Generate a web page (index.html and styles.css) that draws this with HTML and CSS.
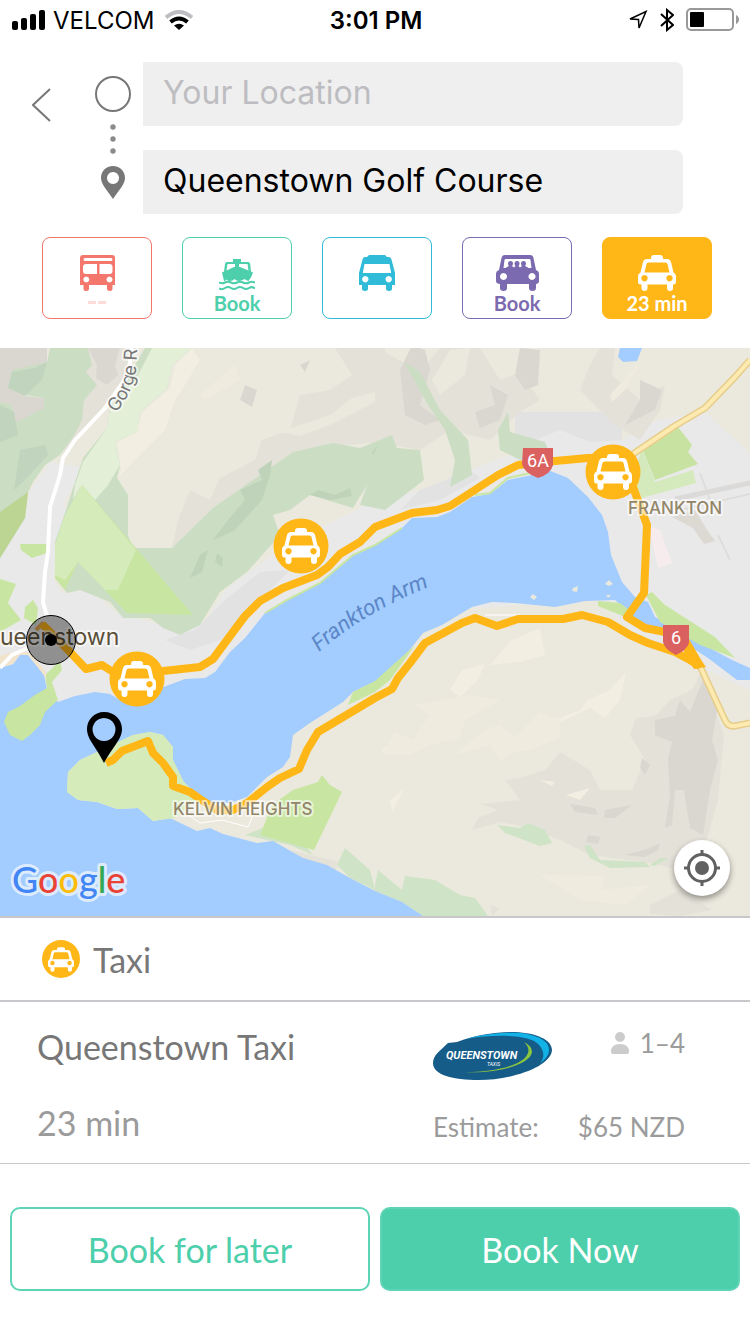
FILE: index.html
```html
<!DOCTYPE html>
<html lang="en">
<head>
<meta charset="UTF-8">
<meta name="viewport" content="width=device-width, initial-scale=1.0">
<title>Queenstown Taxi</title>
<link rel="stylesheet" href="styles.css">
</head>
<body>
<svg class="sprite" aria-hidden="true">
    <symbol id="taxi" viewBox="0 0 38 36">
        <path fill="currentColor" fill-rule="evenodd" d="M9 4h4V3q0-3 3-3h6q3 0 3 3v1h4q3 0 4 3l2.500 10.500q2.500 1 2.500 4V27q0 2-2 2.500H35V33q0 3-3 3t-3-3v-3.500H9.500V33q0 3-3 3t-3-3v-3.500H2Q0 29 0 27v-5.500q0-3 2.500-4L5 7q1-3 4-3zM10.500 7.500q-1.500 0-2 1.500L6.500 17.500h25L29.500 9q-.5-1.500-2-1.500zM6.500 20a3.200 3.200 0 1 0 .01 0zM31.500 20a3.200 3.200 0 1 0 .01 0z"/>
    </symbol>
    <symbol id="bus" viewBox="0 0 35 36">
        <path fill="currentColor" fill-rule="evenodd" d="M3 0h29q3 0 3 3v27h-2.500v3.500q0 2.500-2.700 2.500t-2.800-2.500V30H9v3.500Q9 36 6.200 36t-2.700-2.500V30H0V3q0-3 3-3zM5 3q-1.500 0-1.500 1.500T5 6h26q1.500 0 1.500-1.500T31 3zM6 9q-3 0-3 3v4q0 3 3 3h11V9zM19.500 9v10h10q3 0 3-3v-4q0-3-3-3zM6.300 21.500a3 3 0 1 0 .01 0zM29.500 21.500a3 3 0 1 0 .01 0z"/>
    </symbol>
    <symbol id="ferry" viewBox="0 0 36 32">
        <path fill="currentColor" fill-rule="evenodd" d="M14 0h8v3h7q2 0 2.200 2l.8 7.500 2 1-1.500 4-3 4.500q-2-.3-4-2-3 2-5.500 2t-4.500-2q-2 2-4.500 2-2 0-3.500-1.500-1 1.500-2.500 1.500L3 13.500l2-1L6 5q.2-2 2-2h6zM8.500 5 7.500 11.500 15 8h1V5zM20 5v3h1l8.500 3.500L28.500 5z"/>
        <path fill="none" stroke="currentColor" stroke-width="2" d="M0 23.500q3 1.500 6 0t6 0 6 0 6 0 6 0 6 0M0 29.500q3 1.500 6-.5t6 0 6 0 6 0 6 0 6 .5"/>
    </symbol>
    <symbol id="van" viewBox="0 0 36 36">
        <path fill="currentColor" fill-rule="evenodd" d="M10 0h16l2 2h2q2 0 2.500 2.500L36 18v12h-3v3.500q0 2.500-3 2.500t-3-2.500V30H9v3.500Q9 36 6 36t-3-2.500V30H0V18L3.500 4.500Q4 2 6 2h2zM5.500 9 3.800 18h28.400L30.500 9zM6.300 21a3.200 3.200 0 1 0 .01 0zM29.700 21a3.200 3.200 0 1 0 .01 0z"/>
    </symbol>
    <symbol id="shuttle" viewBox="0 0 43 36">
        <path fill="currentColor" fill-rule="evenodd" d="M9 0h25q3 0 3.500 3L40 15q3 1 3 4v7q0 2.500-3 3v4q0 3-3.500 3T33 33v-4H11v4q0 3-3.500 3T4 33v-4q-4-.5-4-3v-7q0-3 3-4L5.500 3Q6 0 9 0zM10 4q-1.500 0-1.500 1L7.500 13h28L34.500 5q0-1-1.500-1zM7.500 18a3.500 3.500 0 1 0 .01 0zM36 18a3.500 3.500 0 1 0 .01 0z"/>
        <path fill="currentColor" d="M12 8.500a2.500 2.500 0 1 1 5 0q0 1.500-1 2.500l2 1.500 1.500-1.500q-1-1-1-2.500a2.500 2.500 0 1 1 5 0q0 1.500-1 2.500l1.500 1.500 2-1.500q-1-1-1-2.500a2.500 2.500 0 1 1 5 0q0 1.500-1 2.500l3 1.500v1H10v-1l3-1.500q-1-1-1-2.500z"/>
    </symbol>
</svg>

<header class="status-bar">
    <div class="carrier">
        <svg width="34" height="20" viewBox="0 0 34 20" aria-hidden="true">
            <rect x="0" y="11" width="6" height="9" rx="2"/>
            <rect x="9" y="8" width="6" height="12" rx="2"/>
            <rect x="18" y="4" width="6" height="16" rx="2"/>
            <rect x="27" y="0" width="6" height="20" rx="2"/>
        </svg>
        <span>VELCOM</span>
        <svg class="wifi" width="28" height="20" viewBox="0 0 28 20" aria-hidden="true">
            <path fill="none" stroke="#bdbdc2" stroke-width="4" d="M1 7.500Q14-3.500 27 7.500"/>
            <path fill="none" stroke="#000" stroke-width="4" d="M5.500 12Q14 5 22.500 12"/>
            <path d="M9 15.500Q14 12 19 15.500L14 20z"/>
        </svg>
    </div>
    <div class="clock">3:01 PM</div>
    <div class="indicators">
        <svg width="20" height="20" viewBox="0 0 20 20" aria-hidden="true">
            <path fill="none" stroke="#000" stroke-width="1.500" d="M2 9 18 1.500 11 18 10.500 9.500z"/>
        </svg>
        <svg width="14" height="24" viewBox="0 0 14 24" aria-hidden="true">
            <path fill="none" stroke="#000" stroke-width="2" d="M1 6 13 17 7 22V2l6 5L1 18"/>
        </svg>
        <svg width="54" height="24" viewBox="0 0 54 24" aria-hidden="true">
            <rect x="1" y="1" width="46" height="21" rx="4" fill="none" stroke="#999" stroke-width="2"/>
            <rect x="4" y="4" width="14" height="15" rx="1"/>
            <path fill="#999" d="M50 7q3 1.500 3 4.500t-3 4.500z"/>
        </svg>
    </div>
</header>

<form class="route">
    <button class="back" type="button" aria-label="Back">
        <svg width="20" height="34" viewBox="0 0 20 34"><path fill="none" stroke="#777" stroke-width="2" d="M18 1 1 17l17 16"/></svg>
    </button>
    <svg class="route-marks" width="38" height="126" viewBox="0 0 38 126" aria-hidden="true">
        <circle cx="19" cy="19" r="17" fill="none" stroke="#777" stroke-width="2"/>
        <g fill="#8a8a8a">
            <circle cx="19" cy="52" r="2.700"/>
            <circle cx="19" cy="64" r="2.700"/>
            <circle cx="19" cy="76" r="2.700"/>
        </g>
        <path fill="#777" fill-rule="evenodd" d="M19 91c-7 0-12 5-12 12 0 6 6 12 12 21 6-9 12-15 12-21 0-7-5-12-12-12zm0 6a6 6 0 1 0 .01 0z"/>
    </svg>
    <div class="fields">
        <input type="text" placeholder="Your Location" aria-label="From">
        <input type="text" value="Queenstown Golf Course" aria-label="To">
    </div>
</form>

<nav class="modes">
    <button class="mode bus" type="button" aria-label="Bus">
        <svg width="35" height="36"><use href="#bus"/></svg>
        <svg class="dashes" width="18" height="3" viewBox="0 0 18 3"><path fill="#fbdcd9" d="M0 0h8v3H0zM10 0h8v3h-8z"/></svg>
    </button>
    <button class="mode ferry" type="button">
        <svg width="36" height="32"><use href="#ferry"/></svg>
        <span>Book</span>
    </button>
    <button class="mode van" type="button" aria-label="Van">
        <svg width="36" height="36"><use href="#van"/></svg>
    </button>
    <button class="mode shuttle" type="button">
        <svg width="43" height="36"><use href="#shuttle"/></svg>
        <span>Book</span>
    </button>
    <button class="mode taxi" type="button">
        <svg width="38" height="36"><use href="#taxi"/></svg>
        <span>23 min</span>
    </button>
</nav>

<section class="map">
    <svg class="map-canvas" viewBox="0 348 750 568" preserveAspectRatio="xMidYMid slice">
        <rect y="348" width="750" height="568" fill="#ebe9dd"/>

        <!-- built-up land -->
        <path fill="#e9e9e9" d="M50 462 80 467 75 485 64 502 68 520 56 545 54 580 62 593 90 590 115 612 185 632 205 622 225 590 275 553 310 533 375 500 430 488 470 470 500 458 530 450 515 440V412H622V440L658 420 705 412 750 453V690L640 640 600 600 300 620 200 700 60 720 0 690V558L25 518 30 490z"/>
        <path fill="#e2e2e3" d="M225 600 260 572 290 570 270 590 220 640 190 650 165 640 195 630zM420 490 470 470 480 478 440 500 400 510zM515 412H622V440L590 442 560 430 515 448z"/>

        <!-- hill shading -->
        <g fill="#e4e1d9">
            <path d="M83 348H135L128 385 105 408 78 440 60 462 83 400zM335 348 352 375 330 390 300 395 290 430 262 440 255 460 220 478 210 500 190 490 178 520 172 548 213 510 247 486 293 452 375 442 420 450 450 430 490 440 520 412 540 400 520 372 500 380 480 348zM590 365 600 348H615L612 375 640 400 665 385 660 410 640 440 615 425 580 390z"/>
            <path d="M505 780 520 778 545 770 560 752 590 770 600 790 632 790 645 760 630 735 636 718 655 716 670 700 692 690 703 668 712 700 724 735 718 800 708 835 702 850 680 870 650 863 590 855 560 840 530 828 500 822 472 830 478 818 498 810 480 804 520 800z"/>
            <path d="M290 850 340 862 335 870 300 858zM490 905 500 908 492 916zM650 905 680 890 712 910 680 916 650 914z"/>
        </g>
        <g fill="#ebe9dd">
            <path d="M385 348H440L420 372 402 362 385 352zM280 432 330 415 352 398 375 392V402L330 425 300 436zM450 350 470 348 465 375 440 395 432 380z"/>
        </g>
        <g fill="#dad7d0">
            <path d="M0 348H47V365L30 375 10 385 25 396 44 398 44 410 30 420 15 423 12 405 0 402zM88 348H120L115 365 118 375 107 385 96 378 97 365zM520 348 540 350 538 385 525 390 515 375zM400 370 412 345 425 350 430 370 420 405 440 420 425 425 405 415zM490 385 508 395 500 420 480 428 475 412 495 405zM640 380 662 390 655 410 625 425 640 400zM245 385 257 390 252 407 240 400zM300 365 310 360 305 372z"/>
            <path d="M655 720 675 716 680 700 690 712 703 680 718 705 712 740 718 760 710 790 703 835 690 828 684 790 675 790 672 825 665 828 670 795 668 760 672 742 655 735zM642 758 650 765 645 775 640 768zM570 804 595 808 598 815 575 812zM605 810 632 805 615 818 604 818zM588 835 600 837 598 844 586 842zM625 855 650 848 660 843 658 850 645 857z"/>
        </g>
        <g fill="#f2eee1">
            <path d="M192 348 175 365 170 388 142 412 137 432 117 442 121 470 118 478 135 460 165 430 175 400 185 385 200 360z"/>
            <path d="M450 690 462 670 485 664 478 680 460 697zM490 665 512 640 540 628 545 655 520 662zM555 720 580 710 588 700 610 690 626 672 620 700 605 718 590 708 560 722zM532 735 545 730 548 738 535 742zM540 780 555 782 552 786zM566 795 590 788 580 800zM382 750 400 735 385 755zM390 800 405 788 392 812z"/>
        </g>
        <path fill="#efebdf" d="M200 395 235 365 240 380 205 400zM610 395 640 362 625 390 612 402zM415 705 470 695 500 700 465 720 460 738 430 745 410 755 383 754 395 732 413 740 430 715zM455 755 485 730 500 725 515 738 540 712 560 720 560 738 530 750 512 752 500 762 490 745zM540 875 605 876 600 890 650 885 625 905 580 900z"/>

        <!-- bush and forest -->
        <path fill="#cbdec4" d="M50 348H88L92 365 86 372 97 385 84 400 82 420 75 434 60 455 45 465 33 482 28 492 25 518 0 558V402L12 405 15 423 44 408 44 398 25 395 8 388 12 370 47 362z"/>
        <path fill="#c1d4bd" d="M12 372 35 368 47 362 42 380 25 396 8 388zM0 405 14 412 18 435 0 442zM20 450 45 445 48 455 25 480 14 490z"/>
        <path fill="#cbdec4" d="M145 348H192L172 365 167 388 140 412 137 432 115 442 120 465 117 478 128 495 128 535 133 548H172L213 508 270 468 293 452 333 443 360 448 392 435 397 448 420 450 424 480 385 510 360 505 367 485 353 508 310 495 290 510 273 515 280 535 247 572 220 592 200 625 180 635 163 628 150 618 123 618 110 602 80 590 67 593 55 578 55 542 66 510 73 488 83 458 107 428 110 408z"/>
        <path fill="#e3efd7" d="M138 375 152 348H192L172 365 167 388 140 412 137 432 115 442 120 465 108 485 95 500 80 487 73 500 75 485 83 462 107 428 110 410z"/>
        <path fill="#bfd2ba" d="M213 540 228 520 245 500 240 490 262 480 258 470 272 460 270 475 262 500 235 530 218 538zM310 495 318 490 335 495 350 488 352 496 330 500zM190 578 200 555 208 550 202 572zM217 553 223 558 222 567 215 562zM372 453 380 442 373 455z"/>
        <path fill="#cbdec4" d="M404 362 420 372 440 410 468 440 472 475 450 487 455 460 445 430 428 405zM498 430 508 412 510 432 545 442 550 455 520 460 500 450z"/>
        <path fill="#cfe3c6" d="M497 825 520 828 528 823 545 830 552 843 540 846 505 833zM584 846 590 845 600 860 645 862 650 867 610 868 590 858zM650 865 660 858 668 858 655 866zM375 885 378 870 402 890 405 876 435 880 460 895 475 898 488 916H423L402 902 375 891zM245 835 270 825 305 845 313 855 290 845zM337 865 345 848 370 870 375 890 350 878z"/>

        <!-- parks -->
        <path fill="#c8e6a1" d="M82 485 193 615 127 613 78 562 65 590 55 578V560z"/>
        <path fill="#d5ebb9" d="M82 485 136 550 118 590 105 590 78 562 65 580 55 575 55 545 65 515z"/>
        <path fill="#bcd593" d="M28 492 25 518 0 558V512z"/>
        <path fill="#c8e6a1" d="M20 544H47V553L32 558 21 550zM0 579 16 584 8 603 21 620 0 632zM25 607 33 600 38 608 36 625 24 618z"/>
        <path fill="#c8e3a1" d="M642 448 678 427 692 445 688 452 698 464 655 480z"/>
        <path fill="#d5eabc" d="M642 448 655 482 693 470 696 483 642 498 632 480z"/>
        <path fill="#f6ecee" d="M648 525 660 530 672 563 658 568z"/>
        <path fill="none" stroke="#dcdad8" stroke-width="5" d="M675 499 750 483"/>
        <path fill="none" stroke="#dcdad8" stroke-width="1.500" d="M700 473 710 500M680 510 750 494M718 535 730 560"/>
        <path fill="#dcd9d3" d="M672 517 695 510 707 530 715 541 704 544 693 528z"/>

        <!-- lake and arm -->
        <path fill="#a3ccff" d="M0 668 13 664 20 655 28 655 36 665 44 675 47 690 58 702 75 696 95 692 110 694 120 700 150 692 185 679 205 678 215 672 230 652 245 638 265 613 287 600 320 583 353 555 375 545 402 528 412 518 437 517 450 512 472 497 490 494 508 480 532 475 548 470 568 478 588 497 602 515 608 532 611 555 622 582 635 597 648 602 655 617 688 635 708 647 732 660 750 668V680H737L708 658 688 645 665 637 638 625 628 612 615 600 585 601 555 607 515 603 492 602 472 607 442 625 423 633 408 652 382 678 353 692 343 702 310 723 293 735 290 757 283 767 267 777 247 797 230 803 213 803 200 797 183 782 173 760 173 747 163 735 150 732 133 735 97 752 80 760 68 772 67 792 78 800 97 802 117 809 138 808 153 821 170 818 197 831 210 828 223 834 257 843 273 841 303 858 327 865 350 878 375 891 402 902 423 916H0z"/>
        <path fill="#a3ccff" d="M620 348H642L637 361 623 362 618 357z"/>
        <path fill="#e9e8dc" d="M530 597 533 594 537 597 534 600zM573 588 578 586 577 592 572 591zM605 584 609 580 613 584 609 586zM606 595 611 595 608 598z"/>
        <path fill="#c8e6a1" d="M60 661 62 670 52 682 58 700 45 712 40 725 30 735 22 741 10 735 4 722 8 712 20 706 35 695 47 688 45 675z"/>
        <path fill="#f1e3cc" d="M0 656 12 652 28 652 36 660 46 672 46 678 36 665 28 655 20 655 13 664 0 668z"/>
        <path fill="#c8e6a1" d="M598 601 620 603 632 612 625 617 598 606zM646 595 652 592 665 605 715 637 735 658 700 645 660 622zM375 681 395 663 415 645 408 655 390 680 375 692 348 705 353 692z"/>
        <path fill="#d5ebb9" d="M67 792 68 772 80 760 97 752 133 735 150 732 163 735 173 747 173 760 184 782 200 797 175 818 153 821 138 808 117 809 97 802 78 800z"/>
        <path fill="#c8e6a1" d="M293 790 318 782 322 775 330 785 342 792 314 850 260 835 272 805z"/>
        <path fill="none" stroke="#c8e6a1" stroke-width="2" d="M265 613 287 600 320 583 353 555 375 545 402 528M475 495 490 493 508 478 530 473"/>
        <path fill="none" stroke="#fff" d="M185 813 200 823 222 820 248 827 253 815M485 615H520"/>

        <!-- roads -->
        <path class="road-minor" d="M132 348 128 375 105 408 75 440 63 458 60 475 50 507 48 552 45 572 43 602 47 616M0 668 12 655 28 648"/>
        <path class="road-edge" d="M633 454 673 427 705 408 735 377 750 360M700 666 725 720Q728 727 735 726L750 723"/>
        <path class="road-main" d="M633 454 673 427 705 408 735 377 750 360M700 666 725 720Q728 727 735 726L750 723"/>
        <path fill="none" stroke="#e9ad55" stroke-width="4" d="M36 630 42 624 55 640"/>

        <!-- trip -->
        <path class="trip" d="M42 624 70 652 86 669 102 665 113 672 136 682 163 671 200 667 213 659 230 636 245 616 260 601 283 588 317 575 328 567 340 554 360 542 375 527 412 513 437 510 450 506 498 475 518 465 555 461 588 458 613 458 633 487 647 525 644 593 627 617 645 628 665 632 685 640 700 666"/>
        <path class="trip" d="M700 666 690 660 675 652 648 643 630 635 608 622 582 615 563 619 518 619 497 626 475 618 462 623 425 643 410 663 398 678 392 689 375 698 318 732 307 750 299 769 280 778 267 787 247 803 233 810 217 810 200 799 190 792 173 786 173 777 163 763 153 753 148 741 122 751 113 760 106 763"/>
        <path fill="#ffb617" d="M680 636 692 648 706 667 694 669 685 655z"/>

        <!-- place names -->
        <path id="gorge" fill="none" d="M116 413Q134 390 136 370L139 320"/>
        <path id="arm" fill="none" d="M319 652Q370 608 440 583"/>
        <text class="label street"><textPath href="#gorge">Gorge R</textPath></text>
        <text class="label water"><textPath href="#arm">Frankton Arm</textPath></text>
        <text class="label town" x="0" y="645">ueenstown</text>
        <text class="label suburb" x="628" y="514">FRANKTON</text>
        <text class="label suburb" x="173" y="815">KELVIN HEIGHTS</text>
        <path fill="#db6060" d="M523 448H553V465Q551 474 538 478 524 473 522 464z"/>
        <text class="shield" x="538" y="467">6A</text>
        <path fill="#db6060" d="M663 625H689V643Q687 650 676 655 665 650 663 642z"/>
        <text class="shield" x="676" y="644">6</text>

        <!-- markers -->
        <circle cx="51" cy="640" r="24.500" fill="#000" fill-opacity=".38" stroke="#000"/>
        <circle cx="51" cy="640" r="6"/>
        <path fill-rule="evenodd" d="M104 712c-10 0-17 8-17 17 0 10 8 16 17 34 10-18 18-24 18-34 0-9-7-17-18-17zm0 6a11.500 11.500 0 1 0 .01 0z"/>
        <g color="#fff" fill="#ffb617">
            <circle cx="301" cy="546" r="27.500"/>
            <use href="#taxi" x="282" y="528" width="38" height="36"/>
            <circle cx="613" cy="472" r="27.500"/>
            <use href="#taxi" x="594" y="454" width="38" height="36"/>
            <circle cx="137" cy="679" r="27.500"/>
            <use href="#taxi" x="118" y="661" width="38" height="36"/>
        </g>

        <text class="google" x="12" y="893"><tspan fill="#4285f4">G</tspan><tspan fill="#ea4335">o</tspan><tspan fill="#fbbc05">o</tspan><tspan fill="#4285f4">g</tspan><tspan fill="#34a853">l</tspan><tspan fill="#ea4335">e</tspan></text>
    </svg>
    <button class="locate" type="button" aria-label="My location">
        <svg width="36" height="36" viewBox="0 0 36 36">
            <circle cx="18" cy="18" r="13.500" fill="none" stroke="#616161" stroke-width="3"/>
            <circle cx="18" cy="18" r="7" fill="#616161"/>
            <path stroke="#616161" stroke-width="3" d="M18 0v5M18 31v5M0 18h5M31 18h5"/>
        </svg>
    </button>
</section>

<h2 class="service">
    <span class="badge"><svg width="26" height="25"><use href="#taxi"/></svg></span>
    Taxi
</h2>

<section class="offer">
    <h3 class="name">Queenstown Taxi</h3>
    <svg class="logo" width="120" height="50" viewBox="0 0 120 50" role="img" aria-label="Queenstown Taxis">
        <path fill="#165c89" d="M0 31C0 23 7 19 15 11L24 10C45 2 65 0 82 0 104 1 119 8 119 18 118 35 78 48 46 48 20 48 0 43 0 31z"/>
        <path fill="#12b2e7" d="M33 7C50 2 70 0 88 1 108 4 116 10 116 18 116 23 112 28 107 31 113 25 111 15 101 9 90 3 60 2 33 7z"/>
        <path fill="#8bc53f" d="M91 10Q99 14 99 20C98 32 65 42 32 40 60 40 88 34 94 23 97 18 95 14 91 10z"/>
        <text class="logo-name" x="13" y="27">QUEENSTOWN</text>
        <text class="logo-sub" x="54" y="34">TAXIS</text>
    </svg>
    <div class="seats">
        <svg width="18" height="22" viewBox="0 0 18 22" aria-hidden="true"><path fill="#ccc" d="M9 0a5 5 0 1 1 0 10A5 5 0 1 1 9 0zM0 20Q0 12 9 12t9 8q0 2-2 2H2q-2 0-2-2z"/></svg>
        1–4
    </div>
    <div class="eta">23 min</div>
    <div class="estimate">Estimate:</div>
    <div class="price">$65 NZD</div>
</section>

<footer class="actions">
    <button class="action later" type="button">Book for later</button>
    <button class="action now" type="button">Book Now</button>
</footer>
</body>
</html>
```

FILE: styles.css
```css
* {
    box-sizing: border-box;
}
body {
    font-family: Lato, sans-serif;
    background-color: #fff;
    color: #777;
    margin: 0;
}
button {
    font-family: inherit;
    background: none;
    border: none;
    padding: 0;
    cursor: pointer;
}
svg {
    display: block;
    flex: none;
}
.sprite {
    display: none;
}

/* status bar */
.status-bar {
    display: grid;
    grid-template-columns: 1fr auto 1fr;
    align-items: center;
    height: 40px;
    padding: 0 10px 0 12px;
    font-family: Inter, sans-serif;
    font-size: 24px;
    color: #000;
}
.carrier,
.indicators {
    display: flex;
    align-items: center;
    gap: 7px;
}
.wifi {
    margin-left: 4px;
}
.clock {
    font-weight: 600;
}
.indicators {
    justify-content: flex-end;
    gap: 12px;
}

/* search fields */
.route {
    display: flex;
    padding: 22px 67px 0 32px;
}
.back {
    width: 62px;
    height: 86px;
}
.route-marks {
    margin: 13px 11px 0 0;
}
.fields {
    flex: 1;
    display: flex;
    flex-direction: column;
    gap: 24px;
}
.fields input {
    width: 100%;
    height: 64px;
    padding: 0 20px 4px;
    border: none;
    border-radius: 0 8px 8px 0;
    background-color: #efefef;
    font-family: Inter, sans-serif;
    font-size: 32px;
    color: #000;
}
.fields input::placeholder {
    color: #bdbdc1;
    opacity: 1;
}

/* transport modes */
.modes {
    display: flex;
    gap: 30px;
    padding: 23px 38px 29px 42px;
}
.mode {
    flex: 1;
    height: 82px;
    display: flex;
    flex-direction: column;
    align-items: center;
    justify-content: flex-end;
    padding-bottom: 3px;
    border: 1px solid currentColor;
    border-radius: 8px;
    font-size: 20px;
    line-height: 24px;
    font-weight: bold;
}
.bus {
    color: #f3776d;
}
.ferry {
    color: #4dcfab;
}
.van {
    color: #30bcd8;
    padding-bottom: 27px;
}
.shuttle {
    color: #7c6ab0;
}
.taxi {
    color: #fff;
    background-color: #ffb617;
    border-color: #ffb617;
}
.dashes {
    margin: 10px 0 11px;
}

/* map */
.map {
    position: relative;
    border-bottom: 2px solid #c8c7cc;
}
.map-canvas {
    width: 100%;
    height: auto;
}
.road-minor,
.road-edge,
.road-main,
.trip {
    fill: none;
    stroke-linejoin: round;
}
.road-minor {
    stroke: #fff;
    stroke-width: 4px;
}
.road-edge {
    stroke: #e6cd8b;
    stroke-width: 7px;
}
.road-main {
    stroke: #fdeab0;
    stroke-width: 4px;
}
.trip {
    stroke: #ffb617;
    stroke-width: 8px;
}
.label {
    font-family: Inter, sans-serif;
    paint-order: stroke;
    stroke: rgba(255, 255, 255, 0.6);
    stroke-width: 4px;
    stroke-linejoin: round;
}
.street {
    font-size: 18px;
    fill: #777;
}
.water {
    font-family: Roboto, sans-serif;
    font-size: 22px;
    font-style: italic;
    fill: #5b87c7;
    stroke: none;
}
.town {
    font-size: 23px;
    fill: #5b5039;
}
.suburb {
    font-size: 17px;
    font-weight: 500;
    fill: #93866a;
}
.shield {
    font-family: Roboto, sans-serif;
    font-size: 18px;
    text-anchor: middle;
    fill: #fff;
}
.google {
    font-size: 36px;
    font-weight: 500;
    paint-order: stroke;
    stroke: #dcebfd;
    stroke-width: 6px;
    stroke-linejoin: round;
}
.locate {
    position: absolute;
    right: 20px;
    bottom: 20px;
    width: 56px;
    height: 56px;
    display: flex;
    align-items: center;
    justify-content: center;
    border-radius: 50%;
    background-color: #fff;
    box-shadow: 0 3px 6px rgba(0, 0, 0, 0.4);
}

/* selected service */
.service {
    display: flex;
    align-items: center;
    gap: 13px;
    height: 84px;
    margin: 0;
    padding: 0 42px;
    border-bottom: 2px solid #c8c7cc;
    font-size: 34px;
    font-weight: normal;
}
.badge {
    width: 38px;
    height: 38px;
    display: flex;
    align-items: center;
    justify-content: center;
    border-radius: 50%;
    background-color: #ffb617;
    color: #fff;
}
.offer {
    display: grid;
    grid-template-columns: 1fr 142px 110px;
    row-gap: 18px;
    align-items: start;
    padding: 22px 65px 18px 37px;
    border-bottom: 1px solid #c8c7cc;
    font-size: 26px;
    line-height: 30px;
    color: #9b9b9b;
}
.name,
.eta {
    margin: 0;
    font-size: 34px;
    line-height: 45px;
    font-weight: normal;
}
.name {
    color: #777;
}
.logo {
    margin-top: 8px;
}
.logo-name {
    font-family: Roboto, sans-serif;
    font-size: 11px;
    font-style: italic;
    font-weight: bold;
    fill: #fff;
}
.logo-sub {
    font-family: Roboto, sans-serif;
    font-size: 5px;
    font-style: italic;
    fill: #fff;
}
.seats {
    display: flex;
    align-items: center;
    justify-content: flex-end;
    gap: 11px;
    margin-top: 4px;
}
.estimate,
.price {
    padding-top: 12px;
    white-space: nowrap;
}
.price {
    text-align: right;
}

/* bottom buttons */
.actions {
    display: flex;
    gap: 10px;
    padding: 43px 10px;
}
.action {
    flex: 1;
    height: 84px;
    border: 2px solid #5cd4b5;
    border-radius: 10px;
    font-size: 34px;
}
.later {
    color: #4dcfab;
}
.now {
    background-color: #4dcfab;
    color: #fff;
}
```
